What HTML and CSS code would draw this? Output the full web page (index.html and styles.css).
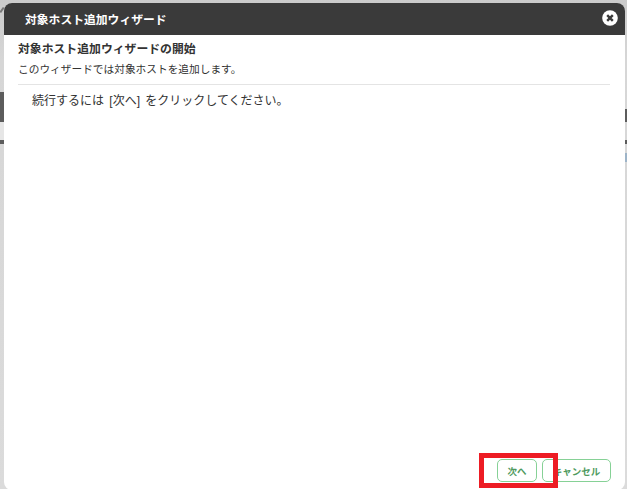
FILE: index.html
```html
<!DOCTYPE html>
<html lang="ja">
<head>
<meta charset="utf-8">
<title>対象ホスト追加ウィザード</title>
<link rel="stylesheet" href="styles.css">
</head>
<body>
<div class="backdrop">
  <span class="strip strip-left-a"></span>
  <span class="strip strip-left-gap"></span>
  <span class="strip strip-left-b"></span>
  <span class="strip strip-right-a"></span>
  <span class="strip strip-right-b"></span>
  <span class="strip strip-right-c"></span>
  <span class="strip strip-peek"></span>
  <section class="dialog">
    <header class="titlebar">
      <h1 class="dialog-title">対象ホスト追加ウィザード</h1>
      <button class="close" aria-label="閉じる">
        <svg viewBox="0 0 16 16" width="16" height="16"><circle cx="8" cy="8" r="7.8" fill="#fff"/><path d="M5.2 5.2l5.6 5.6M10.8 5.2l-5.6 5.6" stroke="#3a3a3a" stroke-width="2.4" fill="none"/></svg>
      </button>
    </header>
    <div class="content">
      <h2 class="step-title">対象ホスト追加ウィザードの開始</h2>
      <p class="step-desc">このウィザードでは対象ホストを追加します。</p>
      <p class="step-body">続行するには [次へ] をクリックしてください。</p>
    </div>
    <footer class="actions">
      <button class="btn">次へ</button>
      <button class="btn btn-cancel">キャンセル</button>
    </footer>
  </section>
  <div class="highlight"></div>
</div>
</body>
</html>
```
FILE: styles.css
```css
* { box-sizing: border-box; }
html, body { margin: 0; padding: 0; }
body { width: 627px; height: 489px; overflow: hidden; font-family: "Liberation Sans", "Noto Sans CJK JP", sans-serif; }
.backdrop { position: relative; width: 627px; height: 489px; background: linear-gradient(#cbcbcb 0, #d6d6d6 60px, #dbdbdb 100%); padding: 3px 2px 0 4px; overflow: hidden; }
.strip { position: absolute; }
.strip-left-a { left: 0; top: 92px; width: 4px; height: 30px; background: #5c5c5c; }
.strip-left-gap { left: 0; top: 122px; width: 4px; height: 18px; background: #e6e6e6; }
.strip-left-b { left: 0; top: 140px; width: 4px; height: 4px; background: #5c5c5c; }
.strip-right-a { right: 0; top: 109px; width: 2px; height: 13px; background: #5c5c5c; }
.strip-right-b { right: 0; top: 140px; width: 2px; height: 4px; background: #5c5c5c; }
.strip-right-c { right: 0; top: 153px; width: 2px; height: 9px; background: #9db4c8; }
.strip-peek { left: 1px; top: 7px; width: 2px; height: 6px; background: #777; transform: rotate(35deg); }
.dialog { position: relative; display: flex; flex-direction: column; height: 487px; background: #fff; border-radius: 8px; }
.titlebar { flex: none; height: 32px; display: flex; align-items: center; justify-content: space-between; padding: 0 7px 2px 21px; background: #3a3a3a; border-radius: 8px 8px 0 0; }
.dialog-title { margin: 0; color: #fff; font-size: 11.8px; font-weight: 700; }
.close { display: flex; padding: 0; border: 0; background: none; }
.content { flex: 1; padding: 6px 15px 0 14px; color: #333; }
.step-title { margin: 0; font-size: 11.85px; line-height: 16px; font-weight: 700; }
.step-desc { margin: 5px 0 0; padding-bottom: 7px; border-bottom: 1px solid #e4e4e4; font-size: 10.7px; line-height: 15px; }
.step-body { margin: 8px 0 0 14px; font-size: 12px; line-height: 16px; word-spacing: 2px; }
.actions { flex: none; display: flex; justify-content: flex-end; gap: 5px; padding: 0 14px 8px 0; }
.btn { height: 23px; width: 40px; padding: 0; background: #fff; border: 1px solid #86d196; border-radius: 5px; color: #4f9a5e; font: 700 9.5px "Liberation Sans", "Noto Sans CJK JP", sans-serif; }
.btn-cancel { width: 69px; }
.highlight { position: absolute; left: 479px; top: 453px; width: 79px; height: 35px; border: 5px solid #ed1c24; }
```
